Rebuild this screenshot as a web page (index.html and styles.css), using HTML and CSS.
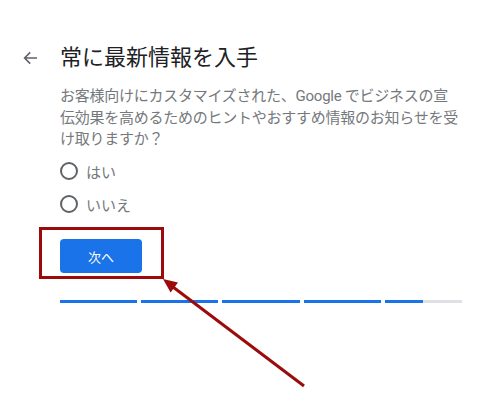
FILE: index.html
```html
<!DOCTYPE html>
<html lang="ja">
<head>
<meta charset="utf-8">
<link rel="stylesheet" href="styles.css">
</head>
<body>
<div class="page">
  <div class="header">
    <svg class="back" width="16" height="16" viewBox="0 0 16 16"><path d="M15 8H2.8M8.2 2.4L2.6 8l5.6 5.6" fill="none" stroke="#5f6368" stroke-width="1.6"/></svg>
    <h1 class="title">常に最新情報を入手</h1>
  </div>
  <div class="content">
    <p class="desc">お客様向けにカスタマイズされた、Google でビジネスの宣<br>伝効果を高めるためのヒントやおすすめ情報のお知らせを受<br>け取りますか？</p>
    <div class="options">
      <label class="option"><span class="radio"></span><span class="label">はい</span></label>
      <label class="option"><span class="radio"></span><span class="label">いいえ</span></label>
    </div>
    <button class="next">次へ</button>
    <div class="progress">
      <span class="seg"></span>
      <span class="seg"></span>
      <span class="seg"></span>
      <span class="seg"></span>
      <span class="seg partial"><span class="fill"></span></span>
    </div>
  </div>
  <div class="highlight"></div>
  <svg class="pointer" width="500" height="412" viewBox="0 0 500 412">
    <line x1="304" y1="386" x2="173" y2="287" stroke="#9b0b0b" stroke-width="3"/>
    <polygon points="163,279 178,282.6 170.6,292.6" fill="#9b0b0b"/>
  </svg>
</div>
</body>
</html>
```
FILE: styles.css
```css
html, body {
  margin: 0;
  padding: 0;
  background: #fff;
}
body {
  font-family: Roboto, "Noto Sans CJK JP", sans-serif;
  width: 500px;
  height: 412px;
  overflow: hidden;
}
.page {
  position: relative;
  width: 500px;
  height: 412px;
  padding-top: 42px;
  box-sizing: border-box;
}
.header {
  display: flex;
  align-items: center;
  height: 32px;
  padding-left: 22px;
  gap: 22px;
}
.back {
  display: block;
  flex: none;
}
.title {
  margin: 0;
  font-size: 22px;
  font-weight: 400;
  line-height: 32px;
  color: #202124;
}
.content {
  padding-left: 60px;
  width: 402px;
}
.desc {
  margin: 12px 0 0;
  font-size: 15px;
  line-height: 21.5px;
  letter-spacing: -0.25px;
  color: #75787c;
  white-space: nowrap;
}
.options {
  margin-top: 4px;
  display: flex;
  flex-direction: column;
}
.option {
  display: flex;
  align-items: center;
  height: 33px;
  gap: 8px;
}
.radio {
  width: 18px;
  height: 18px;
  box-sizing: border-box;
  border: 2px solid #5f6368;
  border-radius: 50%;
  flex: none;
}
.label {
  font-size: 15px;
  color: #75787c;
}
.next {
  display: block;
  margin-top: 18.5px;
  width: 82px;
  height: 34px;
  border: none;
  border-radius: 4px;
  background: #1a73e8;
  color: #fff;
  font-family: Roboto, "Noto Sans CJK JP", sans-serif;
  font-size: 13px;
  padding: 0;
}
.progress {
  display: flex;
  gap: 4px;
  margin-top: 27px;
  height: 3px;
}
.seg {
  flex: 1;
  background: #1a73e8;
  height: 3px;
}
.seg.partial {
  background: #dfe1e5;
}
.fill {
  display: block;
  width: 50%;
  height: 3px;
  background: #1a73e8;
}
.highlight {
  position: absolute;
  left: 39px;
  top: 227px;
  width: 125px;
  height: 52px;
  box-sizing: border-box;
  border: 3px solid #9b0b0b;
}
.pointer {
  position: absolute;
  left: 0;
  top: 0;
  pointer-events: none;
}
```
